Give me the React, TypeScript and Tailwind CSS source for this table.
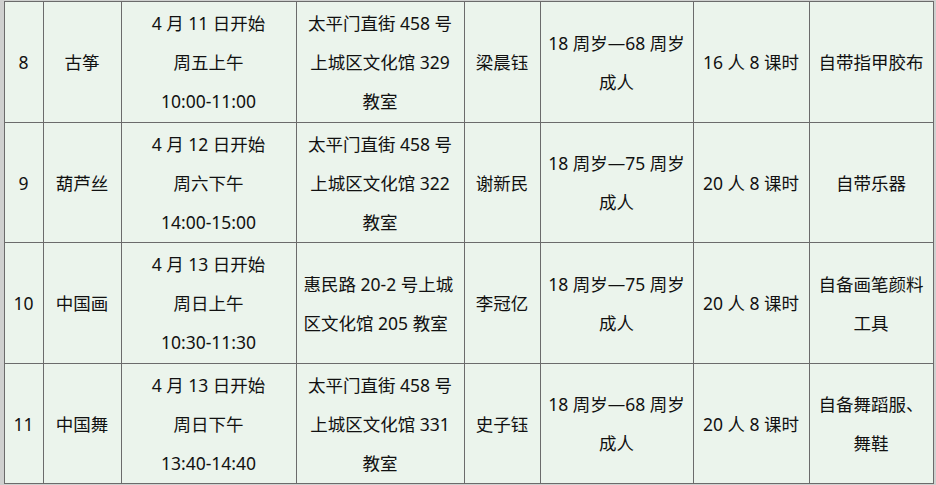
import React from "react";

type Row = {
  no: string;
  name: string;
  time: string[];
  addr: string[];
  addrLeft?: boolean;
  teacher: string;
  age: string[];
  cap: string;
  note: string[];
};

const rows: Row[] = [
  {
    no: "8",
    name: "古筝",
    time: ["4 月 11 日开始", "周五上午", "10:00-11:00"],
    addr: ["太平门直街 458 号", "上城区文化馆 329", "教室"],
    teacher: "梁晨钰",
    age: ["18 周岁—68 周岁", "成人"],
    cap: "16 人 8 课时",
    note: ["自带指甲胶布"],
  },
  {
    no: "9",
    name: "葫芦丝",
    time: ["4 月 12 日开始", "周六下午", "14:00-15:00"],
    addr: ["太平门直街 458 号", "上城区文化馆 322", "教室"],
    teacher: "谢新民",
    age: ["18 周岁—75 周岁", "成人"],
    cap: "20 人 8 课时",
    note: ["自带乐器"],
  },
  {
    no: "10",
    name: "中国画",
    time: ["4 月 13 日开始", "周日上午", "10:30-11:30"],
    addr: ["惠民路 20-2 号上城", "区文化馆 205 教室"],
    addrLeft: true,
    teacher: "李冠亿",
    age: ["18 周岁—75 周岁", "成人"],
    cap: "20 人 8 课时",
    note: ["自备画笔颜料", "工具"],
  },
  {
    no: "11",
    name: "中国舞",
    time: ["4 月 13 日开始", "周日下午", "13:40-14:40"],
    addr: ["太平门直街 458 号", "上城区文化馆 331", "教室"],
    teacher: "史子钰",
    age: ["18 周岁—68 周岁", "成人"],
    cap: "20 人 8 课时",
    note: ["自备舞蹈服、", "舞鞋"],
  },
];

function Lines({ lines }: { lines: string[] }) {
  return (
    <>
      {lines.map((l, i) => (
        <div key={i} className="whitespace-nowrap">
          {l}
        </div>
      ))}
    </>
  );
}

const td =
  "border border-[#6b6b6b] bg-[#ebf4ec] text-center align-middle px-0 pb-0 pt-[2px] leading-[39px]";

export default function App() {
  return (
    <div
      className="w-[936px] h-[485px] bg-[#cfd0cf] overflow-hidden pl-[3.5px] pt-[1px] text-[17.5px] text-[#111]"
      style={{ fontFamily: '"Noto Sans", "Noto Sans CJK SC", sans-serif' }}
    >
      <table className="table-fixed border-collapse w-[929px] border border-[#6b6b6b]">
        <colgroup>
          <col className="w-[39px]" />
          <col className="w-[78px]" />
          <col className="w-[175px]" />
          <col className="w-[168px]" />
          <col className="w-[76px]" />
          <col className="w-[153px]" />
          <col className="w-[116px]" />
          <col className="w-[124px]" />
        </colgroup>
        <tbody>
          {rows.map((r) => (
            <tr key={r.no} className="h-[120.5px]">
              <td className={td}>{r.no}</td>
              <td className={td}>{r.name}</td>
              <td className={td}>
                <Lines lines={r.time} />
              </td>
              <td className={r.addrLeft ? td + " !text-left pl-[7px]" : td}>
                <Lines lines={r.addr} />
              </td>
              <td className={td}>{r.teacher}</td>
              <td className={td}>
                <Lines lines={r.age} />
              </td>
              <td className={td}>{r.cap}</td>
              <td className={td}>
                <Lines lines={r.note} />
              </td>
            </tr>
          ))}
        </tbody>
      </table>
    </div>
  );
}
